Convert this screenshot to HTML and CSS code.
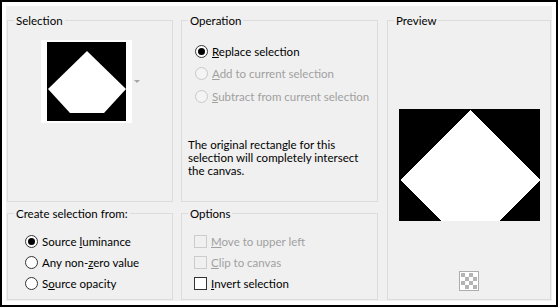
FILE: index.html
```html
<!DOCTYPE html>
<html>
<head>
<meta charset="utf-8">
<link rel="stylesheet" href="styles.css">
</head>
<body>
<div class="window">
  <div class="dialog">
    <fieldset class="group sel">
      <legend>Selection</legend>
      <div class="thumb-row">
        <div class="thumb">
          <svg width="79" height="79" viewBox="0 0 79 79">
            <rect width="79" height="79" fill="#000"/>
            <polygon points="40,9 79,47 57,71 23,71 1,47" fill="#fff"/>
          </svg>
        </div>
        <span class="dd-arrow"></span>
      </div>
    </fieldset>

    <fieldset class="group op">
      <legend>Operation</legend>
      <div class="choices op-choices">
        <div class="choice"><span class="radio checked"></span><span><u>R</u>eplace selection</span></div>
        <div class="choice disabled"><span class="radio"></span><span><u>A</u>dd to current selection</span></div>
        <div class="choice disabled"><span class="radio"></span><span><u>S</u>ubtract from current selection</span></div>
      </div>
      <p class="note"><span class="line">The original rectangle for this</span><span class="line">selection will completely intersect</span><span class="line">the canvas.</span></p>
    </fieldset>

    <fieldset class="group preview">
      <legend>Preview</legend>
      <div class="preview-body">
        <svg class="preview-img" width="141" height="112" viewBox="0 0 141 112" shape-rendering="crispEdges">
          <rect width="141" height="112" fill="#000"/>
          <polygon points="71,1 141,71 71,141 1,71" fill="#fff"/>
        </svg>
        <svg class="checker" width="20" height="20" viewBox="0 0 20 20" shape-rendering="crispEdges">
          <rect x="0.5" y="0.5" width="19" height="19" fill="#fff" stroke="#adadad"/>
          <g fill="#b4b4b4">
            <rect x="2" y="2" width="4" height="4"/>
            <rect x="10" y="2" width="4" height="4"/>
            <rect x="6" y="6" width="4" height="4"/>
            <rect x="14" y="6" width="4" height="4"/>
            <rect x="2" y="10" width="4" height="4"/>
            <rect x="10" y="10" width="4" height="4"/>
            <rect x="6" y="14" width="4" height="4"/>
            <rect x="14" y="14" width="4" height="4"/>
          </g>
        </svg>
      </div>
    </fieldset>

    <fieldset class="group create">
      <legend>Create selection from:</legend>
      <div class="choices low-choices create-choices">
        <div class="choice"><span class="radio checked"></span><span>Source <u>l</u>uminance</span></div>
        <div class="choice"><span class="radio"></span><span>Any non-<u>z</u>ero value</span></div>
        <div class="choice"><span class="radio"></span><span>S<u>o</u>urce opacity</span></div>
      </div>
    </fieldset>

    <fieldset class="group options">
      <legend>Options</legend>
      <div class="choices low-choices opt-choices">
        <div class="choice check disabled"><span class="box"></span><span><u>M</u>ove to upper left</span></div>
        <div class="choice check disabled"><span class="box"></span><span><u>C</u>lip to canvas</span></div>
        <div class="choice check"><span class="box"></span><span><u>I</u>nvert selection</span></div>
      </div>
    </fieldset>
  </div>
</div>
</body>
</html>
```

FILE: styles.css
```css
html, body {
  margin: 0;
  padding: 0;
  background: #fff;
}

body {
  font-family: "Lato", "Liberation Sans", sans-serif;
  font-size: 11.5px;
  color: #000;
}

.window {
  box-sizing: border-box;
  width: 558px;
  height: 307px;
  border: 2px solid #000;
  background: #fff;
  padding: 4px;
}

.dialog {
  box-sizing: border-box;
  height: 100%;
  background: #f0f0f0;
  display: grid;
  grid-template-columns: 166px 197px 165px;
  grid-template-rows: 189px 94px;
  column-gap: 8px;
  row-gap: 4px;
  padding: 7px 0 1px 1px;
}

.group {
  margin: 0;
  padding: 0;
  min-width: 0;
  border: 1px solid #dcdcdc;
}

.group legend {
  margin-left: 6px;
  padding: 0 2px;
  line-height: 15px;
  font-size: 11.5px;
}

.sel { grid-column: 1; grid-row: 1; }
.op { grid-column: 2; grid-row: 1; }
.preview { grid-column: 3; grid-row: 1 / 3; margin-left: 1px; }
.create { grid-column: 1; grid-row: 2; }
.options { grid-column: 2; grid-row: 2; }

/* Selection thumbnail */
.thumb-row {
  display: flex;
  align-items: center;
  padding: 12px 0 0 33px;
}

.thumb {
  background: #fff;
  padding: 2px 6px;
}

.thumb svg { display: block; }

.dd-arrow {
  width: 0;
  height: 0;
  margin-left: 2px;
  border-left: 3px solid transparent;
  border-right: 3px solid transparent;
  border-top: 3px solid #a6a6a6;
}

/* Choices */
.choices {
  display: flex;
  flex-direction: column;
}

.op-choices {
  padding: 12px 0 0 13px;
}

.op-choices .choice { height: 22.5px; }

.low-choices .choice { height: 21px; }

.create-choices { padding: 10px 0 0 17px; }
.opt-choices { padding: 10px 0 0 12px; }

.choice {
  display: flex;
  align-items: center;
  gap: 4px;
  white-space: nowrap;
}

.choice.disabled { color: #a0a0a0; }

.radio {
  box-sizing: border-box;
  width: 13px;
  height: 13px;
  border-radius: 50%;
  border: 1px solid #333;
  background: #fff;
  display: grid;
  place-items: center;
  flex: none;
}

.radio.checked::after {
  content: "";
  width: 7px;
  height: 7px;
  border-radius: 50%;
  background: #000;
}

.disabled .radio {
  border-color: #c8c8c8;
  background: #f4f4f4;
}

.box {
  box-sizing: border-box;
  width: 13px;
  height: 13px;
  border: 1px solid #333;
  background: #fff;
  flex: none;
}

.disabled .box {
  border-color: #cccccc;
  background: #f0f0f0;
}

.note {
  margin: 30px 0 0 6px;
  line-height: 13px;
}

.note .line {
  display: block;
  height: 13px;
  line-height: 13px;
  white-space: nowrap;
}

/* Preview */
.preview-body {
  display: flex;
  flex-direction: column;
  align-items: center;
}

.preview-img {
  display: block;
  margin-top: 81px;
}

.checker {
  display: block;
  margin-top: 50px;
}
```
